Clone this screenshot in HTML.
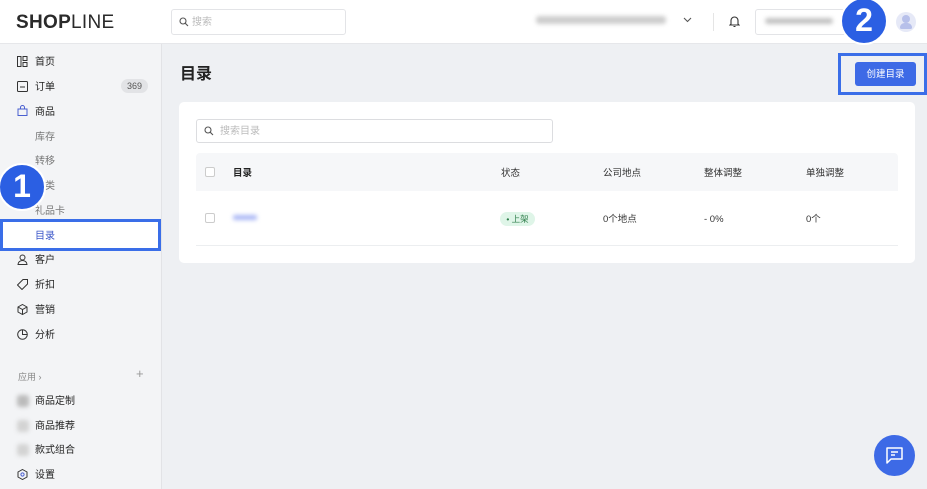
<!DOCTYPE html>
<html><head><meta charset="utf-8"><style>
*{box-sizing:border-box;margin:0;padding:0}
body{width:927px;height:489px;overflow:hidden;position:relative;background:#eef0f3;font-family:"Liberation Sans","Noto Sans CJK SC",sans-serif;color:#222;font-size:10px;line-height:12px}
.abs{position:absolute}
.hdr{left:0;top:0;width:927px;height:44px;background:#fff;border-bottom:1px solid #e6e7ea}
.side{left:0;top:44px;width:162px;height:445px;background:#f3f4f6;border-right:1px solid #e2e3e6}
.it{position:absolute;left:35px;font-size:10px;color:#222;line-height:12px}
.sub{color:#777}
.ic{position:absolute;left:17px;width:11px;height:11px}
.blur{filter:blur(2px)}
.circ{border-radius:50%;background:#2b5fe3;color:#fff;font-weight:bold;text-align:center;border:2px solid #fff}
.t{position:absolute;font-size:9.5px;color:#333;line-height:12px}
</style></head><body>
<div class="abs hdr"></div>
<div class="abs" style="left:16px;top:12px;font-size:19px;line-height:22px;font-weight:bold;letter-spacing:0.3px;color:#2a2a2a">SHOP<span style="font-weight:normal">LINE</span></div>
<div class="abs" style="left:171px;top:9px;width:175px;height:26px;border:1px solid #e3e4e7;border-radius:3px"></div>
<svg class="abs" style="left:179px;top:17px" width="10" height="10" viewBox="0 0 10 10"><circle cx="4" cy="4" r="3" fill="none" stroke="#555" stroke-width="1.1"/><path d="M6.3 6.3L9 9" stroke="#555" stroke-width="1.1"/></svg>
<div class="abs" style="left:192px;top:17px;font-size:10px;color:#bbb">搜索</div>
<div class="abs blur" style="left:536px;top:16px;width:130px;height:8px;background:#b8b8b8;border-radius:3px;opacity:.7"></div>
<svg class="abs" style="left:683px;top:17px" width="9" height="6"><path d="M1 1l3.5 3.5L8 1" fill="none" stroke="#555" stroke-width="1.1"/></svg>
<div class="abs" style="left:713px;top:13px;width:1px;height:18px;background:#e5e5e5"></div>
<svg class="abs" style="left:729px;top:15px" width="11" height="13" viewBox="0 0 11 13"><path d="M2 9V5.5a3.5 3.5 0 0 1 7 0V9l1 1H1z M4.5 11.5h2" fill="none" stroke="#333" stroke-width="1.1"/></svg>
<div class="abs" style="left:755px;top:9px;width:105px;height:26px;border:1px solid #e3e4e7;border-radius:3px"></div>
<div class="abs blur" style="left:765px;top:18px;width:68px;height:6px;background:#c2c2c2;border-radius:3px"></div>
<div class="abs" style="left:896px;top:12px;width:20px;height:20px;border-radius:50%;background:#e6e9f7"></div>
<div class="abs" style="left:902px;top:15px;width:8px;height:8px;border-radius:50%;background:#b7c0ea"></div>
<div class="abs" style="left:900px;top:23px;width:12px;height:6px;border-radius:6px 6px 2px 2px;background:#b7c0ea"></div>
<div class="abs circ" style="left:840px;top:-3px;width:48px;height:48px;font-size:32px;line-height:43px">2</div>

<div class="abs side"></div>
<svg class="ic" style="top:56px" viewBox="0 0 11 11"><rect x="0.5" y="0.5" width="3.5" height="10" fill="none" stroke="#333"/><rect x="6" y="0.5" width="4" height="4" fill="none" stroke="#333"/><rect x="6" y="6.5" width="4" height="4" fill="none" stroke="#333"/></svg>
<div class="it" style="top:57px">首页</div>
<svg class="ic" style="top:81px" viewBox="0 0 11 11"><rect x="0.5" y="0.5" width="10" height="10" rx="1" fill="none" stroke="#333"/><path d="M3 6h5" stroke="#333"/></svg>
<div class="it" style="top:82px">订单</div>
<div class="abs" style="left:121px;top:79px;width:27px;height:14px;border-radius:7px;background:#e2e3e6;font-size:9px;color:#555;text-align:center;line-height:14px">369</div>
<svg class="ic" style="top:105px" viewBox="0 0 11 11"><path d="M1 4h9v6.5H1z M3.5 4V2.5a2 2 0 0 1 4 0V4" fill="none" stroke="#4a5fd0"/></svg>
<div class="it" style="top:107px">商品</div>
<div class="it sub" style="top:132px">库存</div>
<div class="it sub" style="top:156px">转移</div>
<div class="it sub" style="top:181px">分类</div>
<div class="it sub" style="top:206px">礼品卡</div>
<div class="abs" style="left:0;top:219px;width:161px;height:32px;border:3px solid #3a6ee8;background:#fff"></div>
<div class="it" style="top:231px;color:#3a55c8">目录</div>
<svg class="ic" style="top:254px" viewBox="0 0 11 11"><circle cx="5.5" cy="3.5" r="2.5" fill="none" stroke="#333"/><path d="M1 10.5a4.5 4 0 0 1 9 0z" fill="none" stroke="#333"/></svg>
<div class="it" style="top:255px">客户</div>
<svg class="ic" style="top:279px" viewBox="0 0 11 11"><path d="M6 0.5h4.5V5l-5.5 5.5L0.5 6z" fill="none" stroke="#333"/></svg>
<div class="it" style="top:280px">折扣</div>
<svg class="ic" style="top:304px" viewBox="0 0 11 11"><path d="M5.5 0.5l4.5 2.5v5l-4.5 2.5L1 8V3z M1 3l4.5 2.5L10 3 M5.5 5.5v5" fill="none" stroke="#333"/></svg>
<div class="it" style="top:305px">营销</div>
<svg class="ic" style="top:329px" viewBox="0 0 11 11"><circle cx="5.5" cy="5.5" r="4.8" fill="none" stroke="#333"/><path d="M5.5 0.7V5.5H10.3" fill="none" stroke="#333"/></svg>
<div class="it" style="top:330px">分析</div>
<div class="abs" style="left:18px;top:371px;font-size:9px;color:#888">应用 ›</div>
<div class="abs" style="left:136px;top:368px;font-size:13px;color:#999">+</div>
<div class="abs blur" style="left:17px;top:395px;width:12px;height:12px;border-radius:3px;background:#bbb"></div>
<div class="it" style="top:396px">商品定制</div>
<div class="abs blur" style="left:17px;top:420px;width:12px;height:12px;border-radius:3px;background:#d3d3d3"></div>
<div class="it" style="top:421px">商品推荐</div>
<div class="abs blur" style="left:17px;top:444px;width:12px;height:12px;border-radius:3px;background:#d3d3d3"></div>
<div class="it" style="top:445px">款式组合</div>
<svg class="ic" style="top:469px" viewBox="0 0 11 11"><path d="M5.5 0.5l4.5 2.5v5l-4.5 2.5L1 8V3z" fill="none" stroke="#333"/><circle cx="5.5" cy="5.5" r="1.6" fill="none" stroke="#4a5fd0"/></svg>
<div class="it" style="top:470px">设置</div>
<div class="abs circ" style="left:-2px;top:163px;width:48px;height:48px;font-size:32px;line-height:43px">1</div>

<div class="abs" style="left:180px;top:65px;font-size:16px;line-height:20px;font-weight:bold;color:#222">目录</div>
<div class="abs" style="left:838px;top:53px;width:89px;height:42px;border:3px solid #3a6ee8"></div>
<div class="abs" style="left:855px;top:62px;width:61px;height:24px;padding-top:2px;background:#3d6ae6;border-radius:3px;color:#fff;font-size:9.5px;text-align:center;line-height:22px">创建目录</div>

<div class="abs" style="left:179px;top:102px;width:736px;height:161px;background:#fff;border-radius:5px"></div>
<div class="abs" style="left:196px;top:119px;width:357px;height:24px;border:1px solid #dcdde0;border-radius:3px"></div>
<svg class="abs" style="left:204px;top:126px" width="10" height="10" viewBox="0 0 10 10"><circle cx="4" cy="4" r="3" fill="none" stroke="#555" stroke-width="1.1"/><path d="M6.3 6.3L9 9" stroke="#555" stroke-width="1.1"/></svg>
<div class="abs" style="left:220px;top:126px;font-size:10px;color:#bbb">搜索目录</div>
<div class="abs" style="left:196px;top:153px;width:702px;height:38px;background:#f6f7f9;border-radius:4px 4px 0 0"></div>
<div class="abs" style="left:196px;top:245px;width:702px;height:1px;background:#eceef0"></div>
<div class="abs" style="left:205px;top:167px;width:10px;height:10px;border:1px solid #ccc;border-radius:2px;background:#fff"></div>
<div class="abs" style="left:205px;top:213px;width:10px;height:10px;border:1px solid #ccc;border-radius:2px;background:#fff"></div>
<div class="t" style="left:233px;top:168px;font-weight:bold;color:#222">目录</div>
<div class="t" style="left:501px;top:168px">状态</div>
<div class="t" style="left:603px;top:168px">公司地点</div>
<div class="t" style="left:704px;top:168px">整体调整</div>
<div class="t" style="left:806px;top:168px">单独调整</div>
<div class="abs blur" style="left:233px;top:215px;width:24px;height:5px;background:#aab7f5;border-radius:2px"></div>
<div class="abs" style="left:500px;top:212px;width:35px;height:14px;padding-top:1px;border-radius:7px;background:#dff5e8;color:#2e7d4a;font-size:8.5px;line-height:13px;text-align:center">• 上架</div>
<div class="t" style="left:603px;top:214px">0个地点</div>
<div class="t" style="left:704px;top:214px">- 0%</div>
<div class="t" style="left:806px;top:214px">0个</div>

<div class="abs" style="left:874px;top:435px;width:41px;height:41px;border-radius:50%;background:#3d6ae6"></div>
<svg class="abs" style="left:885px;top:446px" width="19" height="19" viewBox="0 0 19 19"><path d="M2 2h15v11H6l-4 4z" fill="none" stroke="#fff" stroke-width="1.5" stroke-linejoin="round"/><path d="M6 6h7M6 9h4" stroke="#fff" stroke-width="1.5"/></svg>
</body></html>
